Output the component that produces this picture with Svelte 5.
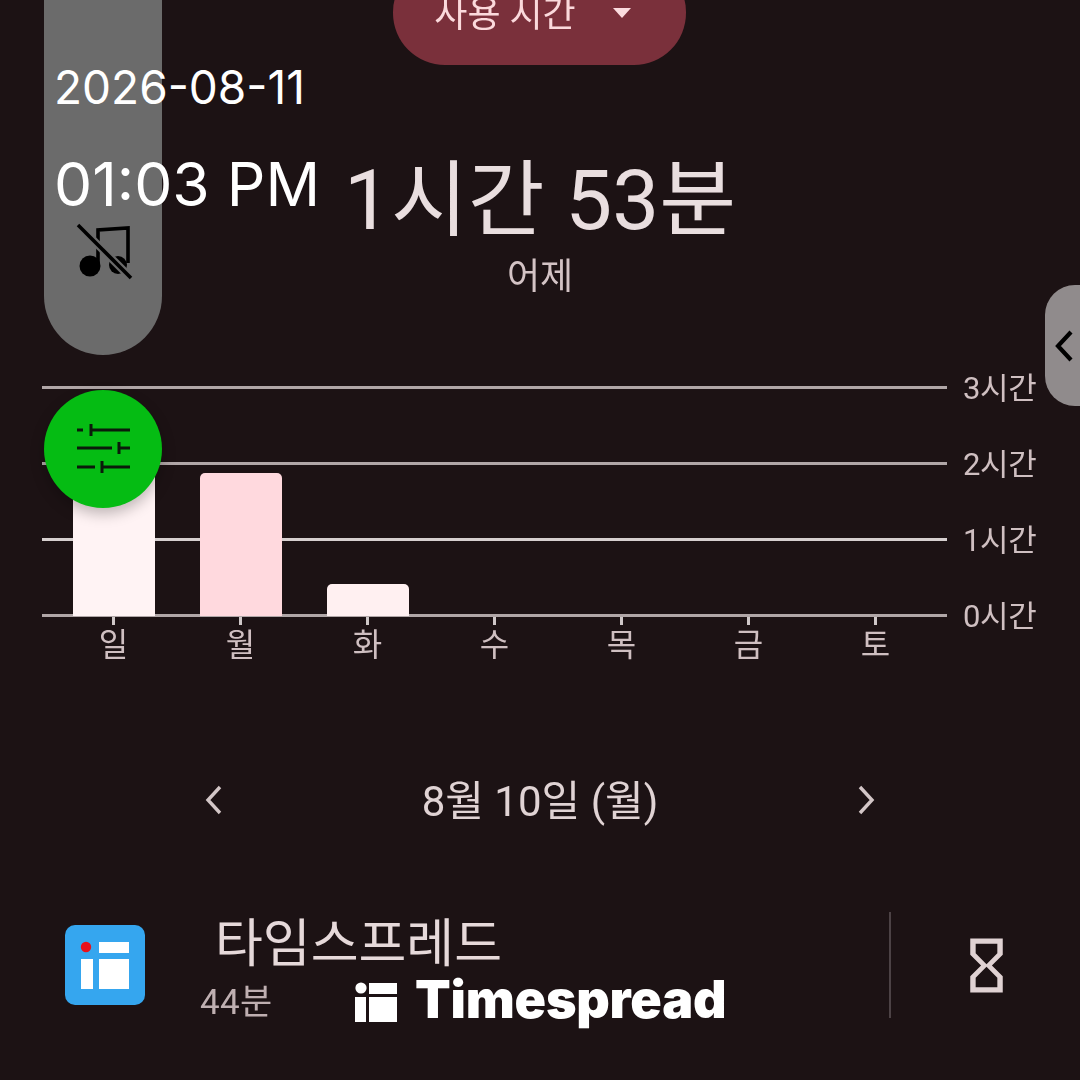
<script>
  const yTicks = ['3시간', '2시간', '1시간', '0시간'];
  const maxHours = 3;
  const days = [
    {label: '일', hours: 2.0, color: '#fff3f4'},
    {label: '월', hours: 1.88, color: '#ffd9de'},
    {label: '화', hours: 0.42, color: '#fff0f1'},
    {label: '수', hours: 0, color: ''},
    {label: '목', hours: 0, color: ''},
    {label: '금', hours: 0, color: ''},
    {label: '토', hours: 0, color: ''}
  ];
</script>

<div class="screen">
  <header class="head">
    <div class="chip">
      <span>사용 시간</span>
      <i class="caret"></i>
    </div>
    <h1>1시간 53분</h1>
    <p>어제</p>
  </header>

  <section class="chart">
    <div class="plot">
      {#each yTicks as t}
        <div class="gridrow">
          <div class="line"></div>
          <span class="ylabel">{t}</span>
        </div>
      {/each}
      <div class="bars">
        {#each days as d}
          <div class="barcol">
            {#if d.hours > 0}
              <div class="bar" style="height: {(d.hours / maxHours) * 228}px; background: {d.color}"></div>
            {/if}
          </div>
        {/each}
      </div>
    </div>
    <div class="xaxis">
      {#each days as d}
        <div class="xcol">
          <i class="tick"></i>
          <span>{d.label}</span>
        </div>
      {/each}
    </div>
  </section>

  <nav class="datenav">
    <svg width="20" height="32" viewBox="0 0 20 32"><path d="M16 3 L4 16 L16 29" fill="none" stroke="#d3c6c7" stroke-width="3.4"/></svg>
    <span>8월 10일 (월)</span>
    <svg width="20" height="32" viewBox="0 0 20 32"><path d="M4 3 L16 16 L4 29" fill="none" stroke="#d3c6c7" stroke-width="3.4"/></svg>
  </nav>

  <div class="approw">
    <svg class="appicon" width="80" height="80" viewBox="0 0 80 80">
      <rect width="80" height="80" rx="10" fill="#35a6ef"/>
      <circle cx="21" cy="22" r="5.2" fill="#e8101c"/>
      <rect x="34" y="17" width="30" height="11" fill="#fff"/>
      <rect x="16" y="34" width="12" height="30" fill="#fff"/>
      <rect x="34" y="34" width="30" height="30" fill="#fff"/>
    </svg>
    <div class="appinfo">
      <div class="appname">타임스프레드</div>
      <div class="apptime">44분</div>
    </div>
    <div class="divider"></div>
    <div class="timer">
      <svg width="65" height="65" viewBox="0 0 24 24"><path fill="#e0d2d3" d="M6 2v6h.01L6 8.01 10 12l-4 4 .01.01H6V22h12v-5.99h-.01L18 16l-4-4 4-3.99-.01-.01H18V2H6zm10 14.5V20H8v-3.5l4-4 4 4zm-4-5l-4-4V4h8v3.5l-4 4z"/></svg>
    </div>
  </div>

  <!-- floating stuff over the app -->
  <div class="sidepill">
    <svg width="64" height="64" viewBox="0 0 64 64">
      <circle cx="20" cy="49" r="10.5" fill="#000"/>
      <path d="M28 49 V13 L58 11 V46" fill="none" stroke="#000" stroke-width="3.6"/>
      <circle cx="48" cy="48" r="9" fill="#000"/>
      <path d="M8 8 L61 61" stroke="#6b6b6b" stroke-width="8"/>
      <path d="M8 8 L61 61" stroke="#000" stroke-width="3.6"/>
    </svg>
  </div>

  <div class="clock">
    <div class="date">2026-08-11</div>
    <div class="time">01:03 PM</div>
  </div>

  <div class="fab">
    <svg width="60" height="60" viewBox="0 0 60 60" fill="none" stroke="#0b1a0b" stroke-width="3">
      <path d="M4 11 H10 M18 11 H57 M18 5 V17"/>
      <path d="M4 29 H39 M46 29 H57 M46 23 V35"/>
      <path d="M4 48 H22 M29 48 H57 M29 42 V54"/>
    </svg>
  </div>

  <div class="handle">
    <svg width="22" height="34" viewBox="0 0 22 34"><path d="M18 3 L5 17 L18 31" fill="none" stroke="#000" stroke-width="4.2"/></svg>
  </div>

  <div class="brand">
    <svg width="42" height="40" viewBox="0 0 42 40">
      <circle cx="6" cy="6" r="5.6" fill="#fff"/>
      <rect x="14" y="1" width="28" height="11" fill="#fff"/>
      <rect x="0" y="15" width="11" height="25" fill="#fff"/>
      <rect x="14" y="15" width="28" height="25" fill="#fff"/>
    </svg>
    <span>Timespread</span>
  </div>
</div>

<style>
  :global(body) {
    margin: 0;
    background: #1c1214;
  }
  * {
    box-sizing: border-box;
  }
  .screen {
    position: relative;
    width: 1080px;
    height: 1080px;
    overflow: hidden;
    background: #1c1214;
    font-family: Roboto, "Noto Sans CJK KR", sans-serif;
    color: #e8dcdd;
  }

  /* the recording is a bit soft, only the overlays on top are sharp */
  .head, .chart, .datenav, .approw {
    filter: blur(0.6px);
  }

  .head {
    display: flex;
    flex-direction: column;
    align-items: center;
  }
  .chip {
    display: flex;
    align-items: center;
    justify-content: center;
    gap: 37px;
    width: 293px;
    height: 105px;
    margin-top: -40px;
    margin-right: 1px;
    padding: 0 14px 4px 0;
    border-radius: 52px;
    background: #7a303b;
    color: #fbd9dc;
    font-size: 36px;
  }
  .caret {
    width: 0;
    height: 0;
    border-left: 9px solid transparent;
    border-right: 9px solid transparent;
    border-top: 10px solid #fbdcdf;
    margin-top: 4px;
  }
  h1 {
    margin: 88px 0 0;
    font-size: 83.5px;
    font-weight: 400;
    line-height: 96px;
    color: #e9dedf;
  }
  .head p {
    margin: 3px 0 0;
    font-size: 36px;
    line-height: 50px;
    color: #d3c3c5;
  }

  .chart {
    margin: 84px 0 0 42px;
    width: 1000px;
  }
  .plot {
    position: relative;
    display: flex;
    flex-direction: column;
    gap: 73px;
  }
  .gridrow {
    display: flex;
    align-items: center;
    height: 3px;
  }
  .line {
    width: 905px;
    height: 3px;
    background: #b0a6a7;
  }
  .gridrow:nth-child(3) .line {
    background: #d6cfcf;
  }
  .ylabel {
    margin: -4px 0 0 16px;
    font-size: 31px;
    letter-spacing: -0.4px;
    color: #cfbfc1;
    white-space: nowrap;
  }
  .bars {
    position: absolute;
    left: 0;
    bottom: 1px;
    width: 905px;
    padding: 0 8px;
    display: grid;
    grid-template-columns: repeat(7, 127px);
    align-items: end;
  }
  .barcol {
    display: flex;
    justify-content: center;
  }
  .bar {
    width: 82px;
    border-radius: 5px 5px 0 0;
  }
  .xaxis {
    width: 905px;
    padding: 0 8px;
    display: grid;
    grid-template-columns: repeat(7, 127px);
  }
  .xcol {
    display: flex;
    flex-direction: column;
    align-items: center;
    font-size: 32px;
    line-height: 40px;
    color: #cfbfc1;
  }
  .tick {
    width: 3px;
    height: 8px;
    background: #cfc8c8;
  }

  .datenav {
    display: flex;
    align-items: center;
    justify-content: space-between;
    width: 672px;
    height: 50px;
    margin: 110px 0 0 204px;
    font-size: 42px;
    line-height: 50px;
    color: #e0d3d4;
  }
  .datenav span {
    margin-top: 4px;
  }

  .approw {
    display: flex;
    align-items: center;
    margin: 85px 0 0 65px;
    height: 110px;
  }
  .appinfo {
    width: 689px;
    margin-left: 55px;
    align-self: stretch;
  }
  .appname {
    margin: 7px 0 0 15px;
    font-size: 52px;
    line-height: 56px;
    color: #e6d9da;
  }
  .apptime {
    margin-top: 10px;
    font-size: 35px;
    letter-spacing: 0.3px;
    line-height: 40px;
    color: #bfafb1;
  }
  .divider {
    width: 2px;
    height: 106px;
    background: #4c4245;
  }
  .timer {
    display: flex;
    margin-left: 63px;
  }

  .sidepill {
    position: absolute;
    left: 44px;
    top: -60px;
    width: 118px;
    height: 415px;
    border-radius: 59px;
    background: #6b6b6b;
  }
  .sidepill svg {
    position: absolute;
    left: 26px;
    top: 277px;
  }
  .clock {
    position: absolute;
    left: 54px;
    top: 58px;
    font-family: Inter, sans-serif;
    color: #fff;
  }
  .date {
    font-size: 46px;
    line-height: 58px;
  }
  .time {
    margin-top: 32px;
    font-size: 60.5px;
    line-height: 72px;
  }
  .fab {
    position: absolute;
    left: 44px;
    top: 390px;
    display: flex;
    align-items: center;
    justify-content: center;
    width: 118px;
    height: 118px;
    border-radius: 50%;
    background: #05bc13;
    box-shadow: 0 6px 14px rgba(0, 0, 0, 0.25);
  }
  .handle {
    position: absolute;
    right: -30px;
    top: 285px;
    display: flex;
    align-items: center;
    width: 65px;
    height: 121px;
    padding: 0 0 0 8px;
    border-radius: 30px;
    background: #908b8c;
  }
  .brand {
    position: absolute;
    left: 355px;
    top: 975px;
    display: flex;
    align-items: flex-start;
    gap: 18px;
    color: #fff;
    font-family: Inter, sans-serif;
    font-weight: 900;
    font-size: 52px;
    letter-spacing: -0.2px;
    line-height: 50px;
  }
  .brand svg {
    margin-top: 7px;
  }
</style>
